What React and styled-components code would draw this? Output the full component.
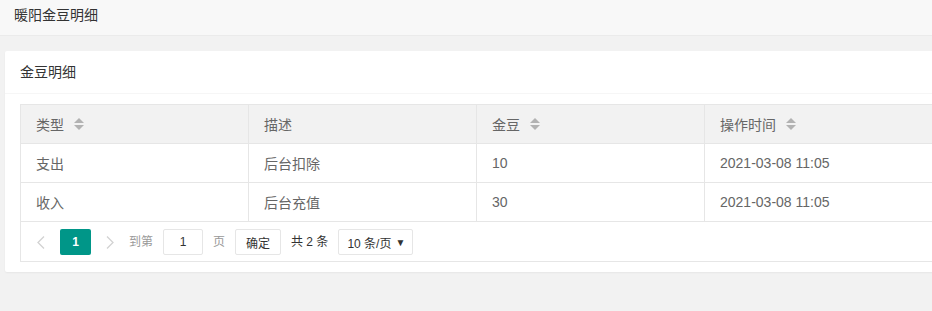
import React from "react";
import styled, { createGlobalStyle } from "styled-components";

const Global = createGlobalStyle`
  html, body { margin: 0; padding: 0; }
  body {
    background: #f2f2f2;
    font-family: "Liberation Sans", "Noto Sans CJK SC", sans-serif;
    font-size: 14px;
    color: #666;
    overflow: hidden;
    width: 932px;
    height: 311px;
  }
  * { box-sizing: border-box; }
`;

const TopBar = styled.div`
  height: 36px;
  background: #f8f8f8;
  border-bottom: 1px solid #ebebeb;
  padding: 5px 14px;
  line-height: 20px;
  color: #333;
  font-size: 14px;
`;

const Page = styled.div`
  padding: 15px 0 0 5px;
`;

const Card = styled.div`
  width: 945px;
  background: #fff;
  border-radius: 2px;
  box-shadow: 0 1px 2px 0 rgba(0, 0, 0, 0.05);
`;

const CardHeader = styled.div`
  height: 43px;
  line-height: 42px;
  padding: 0 15px;
  border-bottom: 1px solid #f6f6f6;
  color: #333;
  font-size: 14px;
`;

const CardBody = styled.div`
  padding: 10px 15px;
`;

const Table = styled.div`
  border: 1px solid #e6e6e6;
  width: 913px;
`;

const Row = styled.div`
  display: grid;
  grid-template-columns: repeat(4, 228px);
  background: ${(p) => (p.$head ? "#f2f2f2" : "#fff")};
`;

const Cell = styled.div`
  height: 39px;
  padding: 0 15px;
  display: flex;
  align-items: center;
  gap: 10px;
  border-right: 1px solid #e6e6e6;
  border-bottom: 1px solid #e6e6e6;
  color: #666;
  font-size: 14px;
  white-space: nowrap;
`;

const Pager = styled.div`
  height: 39px;
  padding: 7px 0 0 7px;
  display: flex;
  align-items: flex-start;
  font-size: 12px;
`;

const Arrow = styled.span`
  width: ${(p) => p.$w}px;
  height: 26px;
  display: flex;
  align-items: center;
  justify-content: flex-start;
  padding-left: ${(p) => p.$pl}px;
`;

const Curr = styled.span`
  width: 31px;
  height: 26px;
  border-radius: 2px;
  background: #009688;
  color: #fff;
  font-weight: bold;
  display: flex;
  align-items: center;
  justify-content: center;
  font-size: 12px;
`;

const Label = styled.span`
  height: 26px;
  line-height: 26px;
  color: ${(p) => p.$color || "#999"};
  margin-right: ${(p) => p.$mr}px;
`;

const Input = styled.span`
  width: 40px;
  height: 26px;
  border: 1px solid #e6e6e6;
  border-radius: 2px;
  display: flex;
  align-items: center;
  justify-content: center;
  color: #333;
  margin-right: 10px;
`;

const Button = styled.span`
  width: 46px;
  height: 26px;
  border: 1px solid #e6e6e6;
  border-radius: 2px;
  display: flex;
  align-items: center;
  justify-content: center;
  color: #333;
  margin-right: 10px;
`;

const Select = styled.span`
  width: 75px;
  height: 26px;
  border: 1px solid #e6e6e6;
  border-radius: 2px;
  display: flex;
  align-items: center;
  justify-content: space-between;
  padding: 0 7px 0 8px;
  color: #333;
`;

const Caret = styled.span`
  font-size: 10px;
  color: #333;
`;

const SortIcon = () => (
  <svg width="10" height="13" viewBox="0 0 10 13" style={{ marginTop: 1 }}>
    <polygon points="0,5 5,0 10,5" fill="#b2b2b2" />
    <polygon points="0,7 10,7 5,12" fill="#b2b2b2" />
  </svg>
);

const Chevron = ({ dir }) => (
  <svg width="8" height="13" viewBox="0 0 8 13">
    <polyline
      points={dir === "left" ? "7,0.5 1,6.5 7,12.5" : "1,0.5 7,6.5 1,12.5"}
      fill="none"
      stroke="#d2d2d2"
      strokeWidth="1.3"
    />
  </svg>
);

const columns = [
  { title: "类型", sort: true },
  { title: "描述", sort: false },
  { title: "金豆", sort: true },
  { title: "操作时间", sort: true },
];

const rows = [
  ["支出", "后台扣除", "10", "2021-03-08 11:05"],
  ["收入", "后台充值", "30", "2021-03-08 11:05"],
];

export default function App() {
  return (
    <>
      <Global />
      <TopBar>暖阳金豆明细</TopBar>
      <Page>
        <Card>
          <CardHeader>金豆明细</CardHeader>
          <CardBody>
            <Table>
              <Row $head>
                {columns.map((c) => (
                  <Cell key={c.title}>
                    {c.title}
                    {c.sort && <SortIcon />}
                  </Cell>
                ))}
              </Row>
              {rows.map((r, i) => (
                <Row key={i}>
                  {r.map((v, j) => (
                    <Cell key={j}>{v}</Cell>
                  ))}
                </Row>
              ))}
              <Pager>
                <Arrow $w={32} $pl={9}>
                  <Chevron dir="left" />
                </Arrow>
                <Curr>1</Curr>
                <Arrow $w={38} $pl={15}>
                  <Chevron dir="right" />
                </Arrow>
                <Label $mr={10}>到第</Label>
                <Input>1</Input>
                <Label $mr={10}>页</Label>
                <Button>确定</Button>
                <Label $mr={10} $color="#333">共 2 条</Label>
                <Select>
                  <span>10 条/页</span>
                  <Caret>▼</Caret>
                </Select>
              </Pager>
            </Table>
          </CardBody>
        </Card>
      </Page>
    </>
  );
}
